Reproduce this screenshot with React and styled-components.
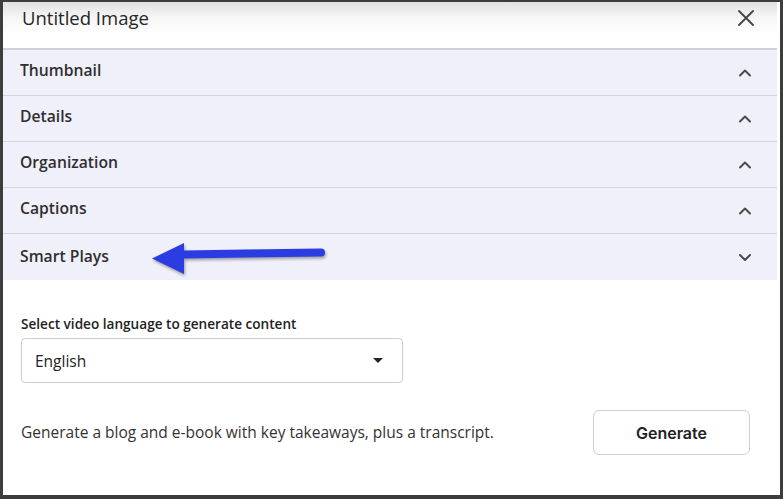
import styled, { createGlobalStyle } from 'styled-components'

const GlobalStyle = createGlobalStyle`
  html, body {
    margin: 0;
    padding: 0;
    background: #3d3d3d;
  }
  * {
    box-sizing: border-box;
  }
`

const Frame = styled.div`
  width: 783px;
  height: 499px;
  padding: 2px 3px 4px 3px;
  background: #3d3d3d;
`

const Panel = styled.div`
  width: 100%;
  height: 100%;
  background: #fff;
  display: flex;
  flex-direction: column;
  position: relative;
  font-family: "Open Sans", "Noto Sans", sans-serif;
`

const Header = styled.div`
  height: 48px;
  margin-right: 3px;
  display: flex;
  align-items: center;
  justify-content: space-between;
  padding: 0 22px 15px 19px;
  background: linear-gradient(#e2e2e2 0%, #f6f6f6 35%, #fff 70%);
  border-bottom: 2px solid #d2d2d6;
`

const Title = styled.div`
  font-size: 18.5px;
  color: #262626;
`

const CloseButton = styled.div`
  width: 18px;
  height: 18px;
  display: flex;
  align-items: center;
  justify-content: center;
`

const Sections = styled.div`
  margin-right: 3px;
  display: flex;
  flex-direction: column;
`

const Row = styled.div`
  height: 46px;
  display: flex;
  align-items: center;
  justify-content: space-between;
  padding: 0 25px 0 17px;
  background: #f0f0fa;
  border-bottom: ${(props) => (props.last ? 'none' : '1px solid #d3d3da')};
`

const RowTitle = styled.div`
  font-size: 15.7px;
  font-weight: 600;
  color: #2f2f2f;
  padding-bottom: ${(props) => (props.last ? '2px' : '5px')};
`

const Body = styled.div`
  padding: 34px 30px 0 18px;
  display: flex;
  flex-direction: column;
`

const Label = styled.div`
  font-size: 13.6px;
  font-weight: 600;
  color: #222;
  margin-bottom: 5px;
`

const Select = styled.div`
  width: 382px;
  height: 45px;
  border: 1px solid #cdcdcd;
  border-radius: 4px;
  display: flex;
  align-items: center;
  justify-content: space-between;
  padding: 0 19px 0 13px;
  font-size: 15.5px;
  color: #222;
`

const Caret = styled.div`
  width: 0;
  height: 0;
  border-left: 5px solid transparent;
  border-right: 5px solid transparent;
  border-top: 5px solid #222;
`

const GenerateRow = styled.div`
  margin-top: 27px;
  display: flex;
  align-items: center;
  justify-content: space-between;
`

const Description = styled.div`
  font-size: 15.5px;
  color: #333;
  padding-bottom: 2px;
`

const Button = styled.div`
  width: 157px;
  height: 45px;
  border: 1px solid #cfcfcf;
  border-radius: 6px;
  display: flex;
  align-items: center;
  justify-content: center;
  font-family: Inter, "Liberation Sans", sans-serif;
  font-size: 16px;
  font-weight: 600;
  color: #222;
`

const Arrow = styled.svg`
  position: absolute;
  left: 146px;
  top: 236px;
  filter: drop-shadow(1px 2px 1.5px rgba(0, 0, 0, 0.35));
`

function Chevron({ up }) {
  return (
    <svg width="14" height="9" viewBox="0 0 14 9">
      <path
        d={up ? 'M2 7.5 L7 2.5 L12 7.5' : 'M2 2 L7 7 L12 2'}
        fill="none"
        stroke="#4a4a4a"
        strokeWidth="2"
        strokeLinecap="round"
        strokeLinejoin="round"
      />
    </svg>
  )
}

const sections = [
  { name: 'Thumbnail', open: true },
  { name: 'Details', open: true },
  { name: 'Organization', open: true },
  { name: 'Captions', open: true },
  { name: 'Smart Plays', open: false },
]

function App() {
  return (
    <Frame>
      <GlobalStyle />
      <Panel>
        <Header>
          <Title>Untitled Image</Title>
          <CloseButton>
            <svg width="16" height="16" viewBox="0 0 16 16">
              <path d="M1 1 L15 15 M15 1 L1 15" stroke="#444" strokeWidth="1.8" strokeLinecap="round" />
            </svg>
          </CloseButton>
        </Header>
        <Sections>
          {sections.map((s, i) => (
            <Row key={s.name} last={i === sections.length - 1}>
              <RowTitle last={i === sections.length - 1}>{s.name}</RowTitle>
              <Chevron up={s.open} />
            </Row>
          ))}
        </Sections>
        <Body>
          <Label>Select video language to generate content</Label>
          <Select>
            <span>English</span>
            <Caret />
          </Select>
          <GenerateRow>
            <Description>Generate a blog and e-book with key takeaways, plus a transcript.</Description>
            <Button>Generate</Button>
          </GenerateRow>
        </Body>
        <Arrow width="186" height="42" viewBox="0 0 186 42">
          <path d="M34 16.5 L172 14.5" stroke="#2c3ce3" strokeWidth="8" strokeLinecap="round" fill="none" />
          <path d="M3 20.5 L35 5 L35 36 Z" fill="#2c3ce3" />
        </Arrow>
      </Panel>
    </Frame>
  )
}

export default App
